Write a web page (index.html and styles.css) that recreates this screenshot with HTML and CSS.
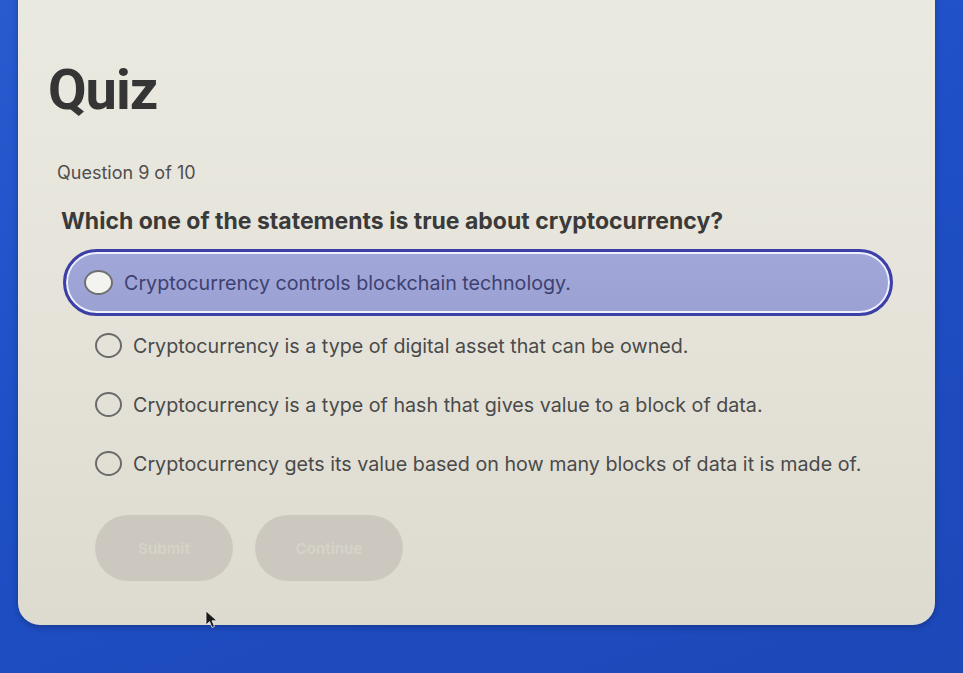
FILE: index.html
```html
<!DOCTYPE html>
<html lang="en">
<head>
<meta charset="utf-8">
<title>Quiz</title>
<link rel="stylesheet" href="styles.css">
</head>
<body>
<main class="card">
  <h1 class="title">Quiz</h1>
  <p class="count">Question 9 of 10</p>
  <h2 class="question">Which one of the statements is true about cryptocurrency?</h2>
  <ul class="options">
    <li class="option selected"><span class="radio"></span><span class="label">Cryptocurrency controls blockchain technology.</span></li>
    <li class="option"><span class="radio"></span><span class="label">Cryptocurrency is a type of digital asset that can be owned.</span></li>
    <li class="option"><span class="radio"></span><span class="label">Cryptocurrency is a type of hash that gives value to a block of data.</span></li>
    <li class="option"><span class="radio"></span><span class="label">Cryptocurrency gets its value based on how many blocks of data it is made of.</span></li>
  </ul>
  <div class="actions">
    <button class="btn btn-submit" disabled>Submit</button>
    <button class="btn btn-continue" disabled>Continue</button>
  </div>
  <svg class="cursor" width="14" height="20" viewBox="0 0 14 20" aria-hidden="true">
    <path d="M1 1 L1 15 L4.5 11.5 L7 17.5 L9.5 16.5 L7 10.8 L12 10.8 Z" fill="#1a1a1a" stroke="#eee" stroke-width="0.8"/>
  </svg>
</main>
</body>
</html>
```

FILE: styles.css
```css
* { box-sizing: border-box; }

html, body {
  margin: 0;
  height: 100%;
}

body {
  width: 963px;
  height: 673px;
  overflow: hidden;
  background: linear-gradient(160deg, #2a5ad0 0%, #1f4fc6 45%, #1c48b8 100%);
  font-family: Inter, Roboto, "Liberation Sans", sans-serif;
}

.card {
  position: relative;
  margin: -30px 28px 0 18px;
  height: 655px;
  padding: 90px 0 0 30px;
  background: linear-gradient(180deg, #ebeae1 0%, #e6e4da 50%, #dddbcf 100%);
  border-radius: 0 0 22px 22px;
  box-shadow: 0 2px 6px rgba(0, 0, 0, 0.25);
}

.title {
  margin: 0;
  height: 60px;
  font-family: Roboto, "Liberation Sans", sans-serif;
  font-size: 56px;
  line-height: 60px;
  font-weight: 700;
  letter-spacing: -1px;
  color: #353535;
}

.count {
  margin: 41px 0 0 9px;
  font-size: 18px;
  line-height: 24px;
  color: #4e4e4e;
}

.question {
  margin: 22px 0 0 13px;
  font-size: 23px;
  line-height: 28px;
  font-weight: 700;
  color: #3a3a3a;
}

.options {
  list-style: none;
  margin: 14px 0 0 15px;
  padding: 0;
  width: 830px;
  display: flex;
  flex-direction: column;
}

.option {
  display: flex;
  align-items: center;
  gap: 11px;
  height: 59px;
  padding-left: 32px;
  font-size: 19.7px;
  color: #4a4a4a;
}

.option.selected {
  height: 67px;
  padding-left: 18px;
  border: 3px solid #3b3fa6;
  border-radius: 34px;
  background: linear-gradient(180deg, #a2a7da 0%, #9ca1d3 100%);
  box-shadow: inset 0 0 0 2px #eef0ff;
  color: #3d4170;
}

.radio {
  flex: none;
  width: 27px;
  height: 25px;
  border: 2px solid #6a6a6a;
  border-radius: 50%;
}

.option.selected .radio {
  width: 29px;
  height: 25px;
  background: #f3f3ef;
  border-color: #707070;
}

.actions {
  display: flex;
  gap: 22px;
  margin: 22px 0 0 47px;
}

.btn {
  height: 66px;
  border: none;
  border-radius: 33px;
  background: #ccc8bf;
  color: #d6d2c9;
  font-family: inherit;
  font-size: 15px;
  font-weight: 700;
}

.btn-submit { width: 138px; }
.btn-continue { width: 148px; }

.cursor {
  position: absolute;
  left: 187px;
  top: 640px;
}
```
